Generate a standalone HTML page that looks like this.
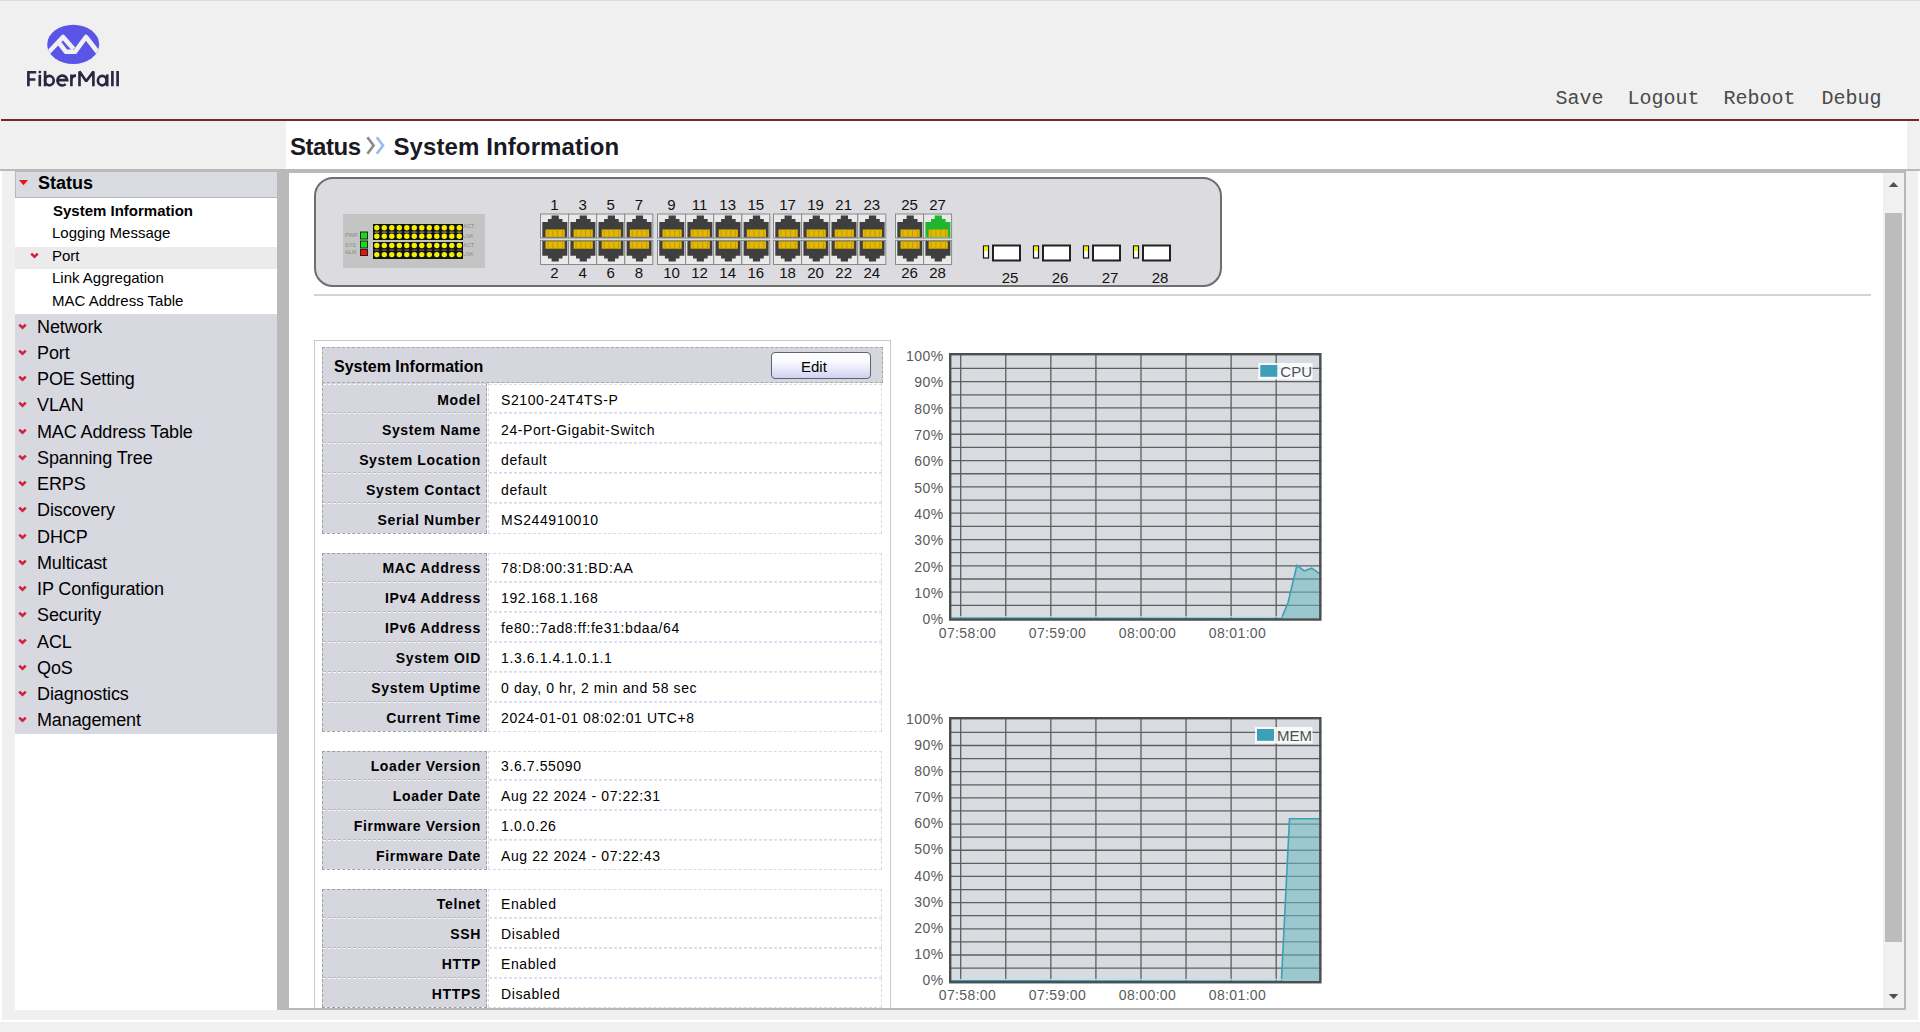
<!DOCTYPE html>
<html><head><meta charset="utf-8"><title>System Information</title>
<style>
html,body{margin:0;padding:0;}
body{width:1920px;height:1032px;overflow:hidden;position:relative;background:#f0f0f0;font-family:"Liberation Sans", sans-serif;color:#000;}
.abs{position:absolute;}
.t{position:absolute;white-space:nowrap;line-height:1;}
</style></head><body>

<div class="abs" style="left:0px;top:0px;width:1920px;height:1px;background:#dcdcd8;"></div>
<svg class="abs" style="left:0;top:0" width="140" height="100" viewBox="0 0 140 100">
<defs><clipPath id="ec"><ellipse cx="73.2" cy="44.4" rx="26" ry="19.7"/></clipPath></defs>
<ellipse cx="73.2" cy="44.4" rx="26" ry="19.7" fill="#5a55e6"/>
<g clip-path="url(#ec)" fill="none" stroke="#f0f0f0" stroke-width="4.6" stroke-linejoin="round">
<path d="M47,54 L63,37 L73.5,49"/>
<path d="M59.5,43.5 L66,51.8 L75,51.8 L86,37 L100,55"/>
</g>
<g fill="none" stroke="#2a2840" stroke-width="2.65" stroke-linecap="butt" stroke-linejoin="miter">
<path d="M28.4,86.3 V70.9 M27.1,72.2 H36.2 M27.1,79.5 H35.4"/>
<path d="M39.8,74.8 V86.3"/>
<path d="M45.1,70.9 V86.3"/>
<ellipse cx="49.4" cy="80.6" rx="4.35" ry="4.7"/>
<path d="M57.3,80.1 H67.2 A4.9,4.95 0 1 0 65.7,84.1"/>
<path d="M71.4,74.5 V86.3 M71.4,80 Q71.4,75.6 76,75.6"/>
<path d="M79.5,86.3 V71.6 L86.2,81.2 L93.4,71.6 V86.3" stroke-linejoin="bevel"/>
<ellipse cx="102.2" cy="80.6" rx="4.3" ry="4.7"/>
<path d="M107.2,74.4 V86.3"/>
<path d="M112.4,70.9 V86.3 M117.6,70.9 V86.3"/>
</g>
<circle cx="39.8" cy="72.1" r="1.4" fill="#2a2840"/>
</svg>
<div class="t" style="left:1555.5px;top:89px;font-family:'Liberation Mono', monospace;font-size:20px;color:#4a4a4a;">Save</div>
<div class="t" style="left:1627.5px;top:89px;font-family:'Liberation Mono', monospace;font-size:20px;color:#4a4a4a;">Logout</div>
<div class="t" style="left:1723.5px;top:89px;font-family:'Liberation Mono', monospace;font-size:20px;color:#4a4a4a;">Reboot</div>
<div class="t" style="left:1821.5px;top:89px;font-family:'Liberation Mono', monospace;font-size:20px;color:#4a4a4a;">Debug</div>
<div class="abs" style="left:1px;top:119px;width:1918px;height:2px;background:#7a2828;"></div>
<div class="abs" style="left:286px;top:121px;width:1621px;height:48px;background:#fff;"></div>
<div class="t" style="left:290px;top:135.18px;font-size:24px;font-weight:bold;color:#1a1a24;letter-spacing:-0.45px;">Status</div>
<svg class="abs" style="left:360px;top:132px" width="30" height="28" viewBox="0 0 30 28">
<path d="M7.4,5.3 L13.6,13.5 L7.4,21.8" fill="none" stroke="#8c8c8c" stroke-width="2.7"/>
<path d="M16.8,5.3 L23,13.5 L16.8,21.8" fill="none" stroke="#96bff0" stroke-width="2.7"/>
</svg>
<div class="t" style="left:393.5px;top:135.18px;font-size:24px;font-weight:bold;color:#1a1a24;letter-spacing:0.1px;">System Information</div>
<div class="abs" style="left:0px;top:169px;width:1920px;height:2px;background:#b9b9b9;"></div>
<div class="abs" style="left:277px;top:169px;width:1629px;height:4px;background:#b9b9b9;"></div>
<div class="abs" style="left:0px;top:171px;width:2px;height:849px;background:#fff;"></div>
<div class="abs" style="left:15px;top:171px;width:262px;height:839px;background:#fff;"></div>
<div class="abs" style="left:15px;top:171px;width:262px;height:26px;background:#d8dce0;border-top:1px solid #b8b8b8;border-left:1px solid #b8b8b8;border-bottom:1px solid #b8b8b8;box-sizing:border-box;height:27px;"></div>
<svg class="abs" style="left:18px;top:178px" width="12" height="10"><path d="M1,2 L10,2 L5.5,7.2 Z" fill="#e8141c"/></svg>
<div class="t" style="left:38px;top:174.26px;font-size:18px;font-weight:bold;">Status</div>
<div class="t" style="left:53px;top:203.40px;font-size:15px;font-weight:bold;">System Information</div>
<div class="t" style="left:52px;top:225.30px;font-size:15px;">Logging Message</div>
<div class="abs" style="left:15px;top:247px;width:262px;height:22px;background:#ebebeb;"></div>
<svg class="abs" style="left:30px;top:252px" width="10" height="8" viewBox="0 0 10 8"><path d="M1.2,1.6 L4.5,4.8 L7.8,1.6" fill="none" stroke="#d42040" stroke-width="2.6" stroke-linejoin="miter"/></svg>
<div class="t" style="left:52px;top:247.90px;font-size:15px;">Port</div>
<div class="t" style="left:52px;top:270.20px;font-size:15px;">Link Aggregation</div>
<div class="t" style="left:52px;top:293.10px;font-size:15px;">MAC Address Table</div>
<div class="abs" style="left:15px;top:314px;width:262px;height:420px;background:#d8d8e0;"></div>
<svg class="abs" style="left:18px;top:322.5px" width="10" height="8" viewBox="0 0 10 8"><path d="M1.2,1.6 L4.5,4.8 L7.8,1.6" fill="none" stroke="#d42040" stroke-width="2.6" stroke-linejoin="miter"/></svg>
<div class="t" style="left:37px;top:317.66px;font-size:18px;letter-spacing:-0.12px;">Network</div>
<svg class="abs" style="left:18px;top:348.75px" width="10" height="8" viewBox="0 0 10 8"><path d="M1.2,1.6 L4.5,4.8 L7.8,1.6" fill="none" stroke="#d42040" stroke-width="2.6" stroke-linejoin="miter"/></svg>
<div class="t" style="left:37px;top:343.91px;font-size:18px;letter-spacing:-0.12px;">Port</div>
<svg class="abs" style="left:18px;top:375.0px" width="10" height="8" viewBox="0 0 10 8"><path d="M1.2,1.6 L4.5,4.8 L7.8,1.6" fill="none" stroke="#d42040" stroke-width="2.6" stroke-linejoin="miter"/></svg>
<div class="t" style="left:37px;top:370.16px;font-size:18px;letter-spacing:-0.12px;">POE Setting</div>
<svg class="abs" style="left:18px;top:401.25px" width="10" height="8" viewBox="0 0 10 8"><path d="M1.2,1.6 L4.5,4.8 L7.8,1.6" fill="none" stroke="#d42040" stroke-width="2.6" stroke-linejoin="miter"/></svg>
<div class="t" style="left:37px;top:396.41px;font-size:18px;letter-spacing:-0.12px;">VLAN</div>
<svg class="abs" style="left:18px;top:427.5px" width="10" height="8" viewBox="0 0 10 8"><path d="M1.2,1.6 L4.5,4.8 L7.8,1.6" fill="none" stroke="#d42040" stroke-width="2.6" stroke-linejoin="miter"/></svg>
<div class="t" style="left:37px;top:422.66px;font-size:18px;letter-spacing:-0.12px;">MAC Address Table</div>
<svg class="abs" style="left:18px;top:453.75px" width="10" height="8" viewBox="0 0 10 8"><path d="M1.2,1.6 L4.5,4.8 L7.8,1.6" fill="none" stroke="#d42040" stroke-width="2.6" stroke-linejoin="miter"/></svg>
<div class="t" style="left:37px;top:448.91px;font-size:18px;letter-spacing:-0.12px;">Spanning Tree</div>
<svg class="abs" style="left:18px;top:480.0px" width="10" height="8" viewBox="0 0 10 8"><path d="M1.2,1.6 L4.5,4.8 L7.8,1.6" fill="none" stroke="#d42040" stroke-width="2.6" stroke-linejoin="miter"/></svg>
<div class="t" style="left:37px;top:475.16px;font-size:18px;letter-spacing:-0.12px;">ERPS</div>
<svg class="abs" style="left:18px;top:506.25px" width="10" height="8" viewBox="0 0 10 8"><path d="M1.2,1.6 L4.5,4.8 L7.8,1.6" fill="none" stroke="#d42040" stroke-width="2.6" stroke-linejoin="miter"/></svg>
<div class="t" style="left:37px;top:501.41px;font-size:18px;letter-spacing:-0.12px;">Discovery</div>
<svg class="abs" style="left:18px;top:532.5px" width="10" height="8" viewBox="0 0 10 8"><path d="M1.2,1.6 L4.5,4.8 L7.8,1.6" fill="none" stroke="#d42040" stroke-width="2.6" stroke-linejoin="miter"/></svg>
<div class="t" style="left:37px;top:527.66px;font-size:18px;letter-spacing:-0.12px;">DHCP</div>
<svg class="abs" style="left:18px;top:558.75px" width="10" height="8" viewBox="0 0 10 8"><path d="M1.2,1.6 L4.5,4.8 L7.8,1.6" fill="none" stroke="#d42040" stroke-width="2.6" stroke-linejoin="miter"/></svg>
<div class="t" style="left:37px;top:553.91px;font-size:18px;letter-spacing:-0.12px;">Multicast</div>
<svg class="abs" style="left:18px;top:585.0px" width="10" height="8" viewBox="0 0 10 8"><path d="M1.2,1.6 L4.5,4.8 L7.8,1.6" fill="none" stroke="#d42040" stroke-width="2.6" stroke-linejoin="miter"/></svg>
<div class="t" style="left:37px;top:580.16px;font-size:18px;letter-spacing:-0.12px;">IP Configuration</div>
<svg class="abs" style="left:18px;top:611.25px" width="10" height="8" viewBox="0 0 10 8"><path d="M1.2,1.6 L4.5,4.8 L7.8,1.6" fill="none" stroke="#d42040" stroke-width="2.6" stroke-linejoin="miter"/></svg>
<div class="t" style="left:37px;top:606.41px;font-size:18px;letter-spacing:-0.12px;">Security</div>
<svg class="abs" style="left:18px;top:637.5px" width="10" height="8" viewBox="0 0 10 8"><path d="M1.2,1.6 L4.5,4.8 L7.8,1.6" fill="none" stroke="#d42040" stroke-width="2.6" stroke-linejoin="miter"/></svg>
<div class="t" style="left:37px;top:632.66px;font-size:18px;letter-spacing:-0.12px;">ACL</div>
<svg class="abs" style="left:18px;top:663.75px" width="10" height="8" viewBox="0 0 10 8"><path d="M1.2,1.6 L4.5,4.8 L7.8,1.6" fill="none" stroke="#d42040" stroke-width="2.6" stroke-linejoin="miter"/></svg>
<div class="t" style="left:37px;top:658.91px;font-size:18px;letter-spacing:-0.12px;">QoS</div>
<svg class="abs" style="left:18px;top:690.0px" width="10" height="8" viewBox="0 0 10 8"><path d="M1.2,1.6 L4.5,4.8 L7.8,1.6" fill="none" stroke="#d42040" stroke-width="2.6" stroke-linejoin="miter"/></svg>
<div class="t" style="left:37px;top:685.16px;font-size:18px;letter-spacing:-0.12px;">Diagnostics</div>
<svg class="abs" style="left:18px;top:716.25px" width="10" height="8" viewBox="0 0 10 8"><path d="M1.2,1.6 L4.5,4.8 L7.8,1.6" fill="none" stroke="#d42040" stroke-width="2.6" stroke-linejoin="miter"/></svg>
<div class="t" style="left:37px;top:711.41px;font-size:18px;letter-spacing:-0.12px;">Management</div>
<div class="abs" style="left:277px;top:169px;width:12px;height:841px;background:#b9b9b9;"></div>
<div class="abs" style="left:289px;top:173px;width:1615px;height:835px;background:#fff;"></div>
<div class="abs" style="left:277px;top:1008px;width:1629px;height:2px;background:#b9b9b9;"></div>
<div class="abs" style="left:1904px;top:169px;width:2px;height:841px;background:#b9b9b9;"></div>
<div class="abs" style="left:1883px;top:173px;width:21px;height:835px;background:#f0f0f0;"></div>
<div class="abs" style="left:1885px;top:213px;width:17px;height:729px;background:#bcbcbc;"></div>
<svg class="abs" style="left:1883px;top:178px" width="21" height="12"><path d="M5.8,9 L10.6,3.9 L15.3,9 Z" fill="#505050"/></svg>
<svg class="abs" style="left:1883px;top:991px" width="21" height="12"><path d="M5.8,3 L10.6,8.1 L15.3,3 Z" fill="#505050"/></svg>
<div class="abs" style="left:1918px;top:171px;width:2px;height:849px;background:#fff;"></div>
<div class="abs" style="left:0px;top:1020px;width:1920px;height:2px;background:#fff;"></div>
<div class="abs" style="left:0;top:0;width:1920px;height:1032px;clip-path:inset(173px 37px 24px 289px);">
<div class="abs" style="left:314px;top:177px;width:908px;height:110px;box-sizing:border-box;border:2px solid #6e6e6e;border-radius:19px;background:#dcdbe0;"></div>
<div class="abs" style="left:343px;top:214px;width:142px;height:54px;background:#c4c4c4;"></div>
<svg class="abs" style="left:343px;top:214px" width="142" height="54" viewBox="0 0 142 54"><text x="2" y="23" font-family="Liberation Sans" font-size="5.5" fill="#8a8a8a">PWR</text><text x="2" y="32.5" font-family="Liberation Sans" font-size="5.5" fill="#8a8a8a">SYS</text><text x="2" y="40" font-family="Liberation Sans" font-size="5.5" fill="#8a8a8a">ALM</text><text x="120" y="14" font-family="Liberation Sans" font-size="5.5" fill="#8a8a8a">ACT</text><text x="120" y="23.5" font-family="Liberation Sans" font-size="5.5" fill="#8a8a8a">LNK</text><text x="120" y="32.5" font-family="Liberation Sans" font-size="5.5" fill="#8a8a8a">ACT</text><text x="120" y="41.5" font-family="Liberation Sans" font-size="5.5" fill="#8a8a8a">LNK</text><rect x="17" y="17.5" width="8" height="8" fill="#222"/><rect x="18" y="18.5" width="6" height="6" fill="#10e010"/><rect x="17" y="26.5" width="8" height="8" fill="#222"/><rect x="18" y="27.5" width="6" height="6" fill="#10e010"/><rect x="17" y="35" width="8" height="7" fill="#222"/><rect x="18" y="36" width="6" height="5" fill="#f01010"/><rect x="30" y="10" width="90" height="16" fill="#111"/><rect x="30" y="28" width="90" height="17" fill="#111"/><circle cx="33.8" cy="13.8" r="2.7" fill="#f2f000"/><circle cx="33.8" cy="22.3" r="2.7" fill="#f2f000"/><circle cx="33.8" cy="31.5" r="2.7" fill="#f2f000"/><circle cx="33.8" cy="40.6" r="2.7" fill="#f2f000"/><rect x="31.3" y="17.6" width="5" height="1" fill="#aaa"/><rect x="31.3" y="35.6" width="5" height="1" fill="#777"/><circle cx="41.3" cy="13.8" r="2.7" fill="#f2f000"/><circle cx="41.3" cy="22.3" r="2.7" fill="#f2f000"/><circle cx="41.3" cy="31.5" r="2.7" fill="#f2f000"/><circle cx="41.3" cy="40.6" r="2.7" fill="#f2f000"/><rect x="38.8" y="17.6" width="5" height="1" fill="#aaa"/><rect x="38.8" y="35.6" width="5" height="1" fill="#777"/><circle cx="48.8" cy="13.8" r="2.7" fill="#f2f000"/><circle cx="48.8" cy="22.3" r="2.7" fill="#f2f000"/><circle cx="48.8" cy="31.5" r="2.7" fill="#f2f000"/><circle cx="48.8" cy="40.6" r="2.7" fill="#f2f000"/><rect x="46.3" y="17.6" width="5" height="1" fill="#aaa"/><rect x="46.3" y="35.6" width="5" height="1" fill="#777"/><circle cx="56.3" cy="13.8" r="2.7" fill="#f2f000"/><circle cx="56.3" cy="22.3" r="2.7" fill="#f2f000"/><circle cx="56.3" cy="31.5" r="2.7" fill="#f2f000"/><circle cx="56.3" cy="40.6" r="2.7" fill="#f2f000"/><rect x="53.8" y="17.6" width="5" height="1" fill="#aaa"/><rect x="53.8" y="35.6" width="5" height="1" fill="#777"/><circle cx="63.8" cy="13.8" r="2.7" fill="#f2f000"/><circle cx="63.8" cy="22.3" r="2.7" fill="#f2f000"/><circle cx="63.8" cy="31.5" r="2.7" fill="#f2f000"/><circle cx="63.8" cy="40.6" r="2.7" fill="#f2f000"/><rect x="61.3" y="17.6" width="5" height="1" fill="#aaa"/><rect x="61.3" y="35.6" width="5" height="1" fill="#777"/><circle cx="71.3" cy="13.8" r="2.7" fill="#f2f000"/><circle cx="71.3" cy="22.3" r="2.7" fill="#f2f000"/><circle cx="71.3" cy="31.5" r="2.7" fill="#f2f000"/><circle cx="71.3" cy="40.6" r="2.7" fill="#f2f000"/><rect x="68.8" y="17.6" width="5" height="1" fill="#aaa"/><rect x="68.8" y="35.6" width="5" height="1" fill="#777"/><circle cx="78.8" cy="13.8" r="2.7" fill="#f2f000"/><circle cx="78.8" cy="22.3" r="2.7" fill="#f2f000"/><circle cx="78.8" cy="31.5" r="2.7" fill="#f2f000"/><circle cx="78.8" cy="40.6" r="2.7" fill="#f2f000"/><rect x="76.3" y="17.6" width="5" height="1" fill="#aaa"/><rect x="76.3" y="35.6" width="5" height="1" fill="#777"/><circle cx="86.3" cy="13.8" r="2.7" fill="#f2f000"/><circle cx="86.3" cy="22.3" r="2.7" fill="#f2f000"/><circle cx="86.3" cy="31.5" r="2.7" fill="#f2f000"/><circle cx="86.3" cy="40.6" r="2.7" fill="#f2f000"/><rect x="83.8" y="17.6" width="5" height="1" fill="#aaa"/><rect x="83.8" y="35.6" width="5" height="1" fill="#777"/><circle cx="93.8" cy="13.8" r="2.7" fill="#f2f000"/><circle cx="93.8" cy="22.3" r="2.7" fill="#f2f000"/><circle cx="93.8" cy="31.5" r="2.7" fill="#f2f000"/><circle cx="93.8" cy="40.6" r="2.7" fill="#f2f000"/><rect x="91.3" y="17.6" width="5" height="1" fill="#aaa"/><rect x="91.3" y="35.6" width="5" height="1" fill="#777"/><circle cx="101.3" cy="13.8" r="2.7" fill="#f2f000"/><circle cx="101.3" cy="22.3" r="2.7" fill="#f2f000"/><circle cx="101.3" cy="31.5" r="2.7" fill="#f2f000"/><circle cx="101.3" cy="40.6" r="2.7" fill="#f2f000"/><rect x="98.8" y="17.6" width="5" height="1" fill="#aaa"/><rect x="98.8" y="35.6" width="5" height="1" fill="#777"/><circle cx="108.8" cy="13.8" r="2.7" fill="#f2f000"/><circle cx="108.8" cy="22.3" r="2.7" fill="#f2f000"/><circle cx="108.8" cy="31.5" r="2.7" fill="#f2f000"/><circle cx="108.8" cy="40.6" r="2.7" fill="#f2f000"/><rect x="106.3" y="17.6" width="5" height="1" fill="#aaa"/><rect x="106.3" y="35.6" width="5" height="1" fill="#777"/><circle cx="116.3" cy="13.8" r="2.7" fill="#f2f000"/><circle cx="116.3" cy="22.3" r="2.7" fill="#f2f000"/><circle cx="116.3" cy="31.5" r="2.7" fill="#f2f000"/><circle cx="116.3" cy="40.6" r="2.7" fill="#f2f000"/><rect x="113.8" y="17.6" width="5" height="1" fill="#aaa"/><rect x="113.8" y="35.6" width="5" height="1" fill="#777"/></svg>
<svg class="abs" style="left:0;top:0;overflow:visible" width="1" height="1"><rect x="540.5" y="214.0" width="28" height="24" fill="#e9e9e9" stroke="#8a8a8a" stroke-width="1"/><polygon transform="translate(540.0,213.5)" points="2.3,8.4 2.3,24 27.3,24 27.3,8.4 22.5,8.4 22.5,5.5 18.8,5.5 18.8,2 11.6,2 11.6,5.5 7.9,5.5 7.9,8.4" fill="#3f3f3f"/><rect x="545.5" y="229.5" width="19.2" height="7.4" fill="#e2b800"/><rect x="547.5" y="229.5" width="1" height="7.5" fill="#c89a00"/><rect x="552.3" y="229.5" width="1" height="7.5" fill="#c89a00"/><rect x="557.1" y="229.5" width="1" height="7.5" fill="#c89a00"/><rect x="561.9" y="229.5" width="1" height="7.5" fill="#c89a00"/><rect x="540.5" y="240.5" width="28" height="24" fill="#e9e9e9" stroke="#8a8a8a" stroke-width="1"/><polygon transform="translate(540.0,240)" points="2.3,1 2.3,15.7 7.9,15.7 7.9,18.6 11.6,18.6 11.6,21.6 18.8,21.6 18.8,18.6 22.5,18.6 22.5,15.7 27.3,15.7 27.3,1" fill="#3f3f3f"/><rect x="545.5" y="241.3" width="19.2" height="7.4" fill="#e2b800"/><rect x="547.5" y="241.3" width="1" height="7.5" fill="#c89a00"/><rect x="552.3" y="241.3" width="1" height="7.5" fill="#c89a00"/><rect x="557.1" y="241.3" width="1" height="7.5" fill="#c89a00"/><rect x="561.9" y="241.3" width="1" height="7.5" fill="#c89a00"/><text x="554.5" y="210.2" text-anchor="middle" font-family="Liberation Sans" font-size="15" fill="#111">1</text><text x="554.5" y="278.2" text-anchor="middle" font-family="Liberation Sans" font-size="15" fill="#111">2</text><rect x="568.6" y="214.0" width="28" height="24" fill="#e9e9e9" stroke="#8a8a8a" stroke-width="1"/><polygon transform="translate(568.1,213.5)" points="2.3,8.4 2.3,24 27.3,24 27.3,8.4 22.5,8.4 22.5,5.5 18.8,5.5 18.8,2 11.6,2 11.6,5.5 7.9,5.5 7.9,8.4" fill="#3f3f3f"/><rect x="573.6" y="229.5" width="19.2" height="7.4" fill="#e2b800"/><rect x="575.6" y="229.5" width="1" height="7.5" fill="#c89a00"/><rect x="580.4" y="229.5" width="1" height="7.5" fill="#c89a00"/><rect x="585.2" y="229.5" width="1" height="7.5" fill="#c89a00"/><rect x="590.0" y="229.5" width="1" height="7.5" fill="#c89a00"/><rect x="568.6" y="240.5" width="28" height="24" fill="#e9e9e9" stroke="#8a8a8a" stroke-width="1"/><polygon transform="translate(568.1,240)" points="2.3,1 2.3,15.7 7.9,15.7 7.9,18.6 11.6,18.6 11.6,21.6 18.8,21.6 18.8,18.6 22.5,18.6 22.5,15.7 27.3,15.7 27.3,1" fill="#3f3f3f"/><rect x="573.6" y="241.3" width="19.2" height="7.4" fill="#e2b800"/><rect x="575.6" y="241.3" width="1" height="7.5" fill="#c89a00"/><rect x="580.4" y="241.3" width="1" height="7.5" fill="#c89a00"/><rect x="585.2" y="241.3" width="1" height="7.5" fill="#c89a00"/><rect x="590.0" y="241.3" width="1" height="7.5" fill="#c89a00"/><text x="582.6" y="210.2" text-anchor="middle" font-family="Liberation Sans" font-size="15" fill="#111">3</text><text x="582.6" y="278.2" text-anchor="middle" font-family="Liberation Sans" font-size="15" fill="#111">4</text><rect x="596.7" y="214.0" width="28" height="24" fill="#e9e9e9" stroke="#8a8a8a" stroke-width="1"/><polygon transform="translate(596.2,213.5)" points="2.3,8.4 2.3,24 27.3,24 27.3,8.4 22.5,8.4 22.5,5.5 18.8,5.5 18.8,2 11.6,2 11.6,5.5 7.9,5.5 7.9,8.4" fill="#3f3f3f"/><rect x="601.7" y="229.5" width="19.2" height="7.4" fill="#e2b800"/><rect x="603.7" y="229.5" width="1" height="7.5" fill="#c89a00"/><rect x="608.5" y="229.5" width="1" height="7.5" fill="#c89a00"/><rect x="613.3" y="229.5" width="1" height="7.5" fill="#c89a00"/><rect x="618.1" y="229.5" width="1" height="7.5" fill="#c89a00"/><rect x="596.7" y="240.5" width="28" height="24" fill="#e9e9e9" stroke="#8a8a8a" stroke-width="1"/><polygon transform="translate(596.2,240)" points="2.3,1 2.3,15.7 7.9,15.7 7.9,18.6 11.6,18.6 11.6,21.6 18.8,21.6 18.8,18.6 22.5,18.6 22.5,15.7 27.3,15.7 27.3,1" fill="#3f3f3f"/><rect x="601.7" y="241.3" width="19.2" height="7.4" fill="#e2b800"/><rect x="603.7" y="241.3" width="1" height="7.5" fill="#c89a00"/><rect x="608.5" y="241.3" width="1" height="7.5" fill="#c89a00"/><rect x="613.3" y="241.3" width="1" height="7.5" fill="#c89a00"/><rect x="618.1" y="241.3" width="1" height="7.5" fill="#c89a00"/><text x="610.7" y="210.2" text-anchor="middle" font-family="Liberation Sans" font-size="15" fill="#111">5</text><text x="610.7" y="278.2" text-anchor="middle" font-family="Liberation Sans" font-size="15" fill="#111">6</text><rect x="624.8" y="214.0" width="28" height="24" fill="#e9e9e9" stroke="#8a8a8a" stroke-width="1"/><polygon transform="translate(624.3,213.5)" points="2.3,8.4 2.3,24 27.3,24 27.3,8.4 22.5,8.4 22.5,5.5 18.8,5.5 18.8,2 11.6,2 11.6,5.5 7.9,5.5 7.9,8.4" fill="#3f3f3f"/><rect x="629.8" y="229.5" width="19.2" height="7.4" fill="#e2b800"/><rect x="631.8" y="229.5" width="1" height="7.5" fill="#c89a00"/><rect x="636.6" y="229.5" width="1" height="7.5" fill="#c89a00"/><rect x="641.4" y="229.5" width="1" height="7.5" fill="#c89a00"/><rect x="646.2" y="229.5" width="1" height="7.5" fill="#c89a00"/><rect x="624.8" y="240.5" width="28" height="24" fill="#e9e9e9" stroke="#8a8a8a" stroke-width="1"/><polygon transform="translate(624.3,240)" points="2.3,1 2.3,15.7 7.9,15.7 7.9,18.6 11.6,18.6 11.6,21.6 18.8,21.6 18.8,18.6 22.5,18.6 22.5,15.7 27.3,15.7 27.3,1" fill="#3f3f3f"/><rect x="629.8" y="241.3" width="19.2" height="7.4" fill="#e2b800"/><rect x="631.8" y="241.3" width="1" height="7.5" fill="#c89a00"/><rect x="636.6" y="241.3" width="1" height="7.5" fill="#c89a00"/><rect x="641.4" y="241.3" width="1" height="7.5" fill="#c89a00"/><rect x="646.2" y="241.3" width="1" height="7.5" fill="#c89a00"/><text x="638.8" y="210.2" text-anchor="middle" font-family="Liberation Sans" font-size="15" fill="#111">7</text><text x="638.8" y="278.2" text-anchor="middle" font-family="Liberation Sans" font-size="15" fill="#111">8</text><rect x="657.5" y="214.0" width="28" height="24" fill="#e9e9e9" stroke="#8a8a8a" stroke-width="1"/><polygon transform="translate(657.0,213.5)" points="2.3,8.4 2.3,24 27.3,24 27.3,8.4 22.5,8.4 22.5,5.5 18.8,5.5 18.8,2 11.6,2 11.6,5.5 7.9,5.5 7.9,8.4" fill="#3f3f3f"/><rect x="662.5" y="229.5" width="19.2" height="7.4" fill="#e2b800"/><rect x="664.5" y="229.5" width="1" height="7.5" fill="#c89a00"/><rect x="669.3" y="229.5" width="1" height="7.5" fill="#c89a00"/><rect x="674.1" y="229.5" width="1" height="7.5" fill="#c89a00"/><rect x="678.9" y="229.5" width="1" height="7.5" fill="#c89a00"/><rect x="657.5" y="240.5" width="28" height="24" fill="#e9e9e9" stroke="#8a8a8a" stroke-width="1"/><polygon transform="translate(657.0,240)" points="2.3,1 2.3,15.7 7.9,15.7 7.9,18.6 11.6,18.6 11.6,21.6 18.8,21.6 18.8,18.6 22.5,18.6 22.5,15.7 27.3,15.7 27.3,1" fill="#3f3f3f"/><rect x="662.5" y="241.3" width="19.2" height="7.4" fill="#e2b800"/><rect x="664.5" y="241.3" width="1" height="7.5" fill="#c89a00"/><rect x="669.3" y="241.3" width="1" height="7.5" fill="#c89a00"/><rect x="674.1" y="241.3" width="1" height="7.5" fill="#c89a00"/><rect x="678.9" y="241.3" width="1" height="7.5" fill="#c89a00"/><text x="671.5" y="210.2" text-anchor="middle" font-family="Liberation Sans" font-size="15" fill="#111">9</text><text x="671.5" y="278.2" text-anchor="middle" font-family="Liberation Sans" font-size="15" fill="#111">10</text><rect x="685.6" y="214.0" width="28" height="24" fill="#e9e9e9" stroke="#8a8a8a" stroke-width="1"/><polygon transform="translate(685.1,213.5)" points="2.3,8.4 2.3,24 27.3,24 27.3,8.4 22.5,8.4 22.5,5.5 18.8,5.5 18.8,2 11.6,2 11.6,5.5 7.9,5.5 7.9,8.4" fill="#3f3f3f"/><rect x="690.6" y="229.5" width="19.2" height="7.4" fill="#e2b800"/><rect x="692.6" y="229.5" width="1" height="7.5" fill="#c89a00"/><rect x="697.4" y="229.5" width="1" height="7.5" fill="#c89a00"/><rect x="702.2" y="229.5" width="1" height="7.5" fill="#c89a00"/><rect x="707.0" y="229.5" width="1" height="7.5" fill="#c89a00"/><rect x="685.6" y="240.5" width="28" height="24" fill="#e9e9e9" stroke="#8a8a8a" stroke-width="1"/><polygon transform="translate(685.1,240)" points="2.3,1 2.3,15.7 7.9,15.7 7.9,18.6 11.6,18.6 11.6,21.6 18.8,21.6 18.8,18.6 22.5,18.6 22.5,15.7 27.3,15.7 27.3,1" fill="#3f3f3f"/><rect x="690.6" y="241.3" width="19.2" height="7.4" fill="#e2b800"/><rect x="692.6" y="241.3" width="1" height="7.5" fill="#c89a00"/><rect x="697.4" y="241.3" width="1" height="7.5" fill="#c89a00"/><rect x="702.2" y="241.3" width="1" height="7.5" fill="#c89a00"/><rect x="707.0" y="241.3" width="1" height="7.5" fill="#c89a00"/><text x="699.6" y="210.2" text-anchor="middle" font-family="Liberation Sans" font-size="15" fill="#111">11</text><text x="699.6" y="278.2" text-anchor="middle" font-family="Liberation Sans" font-size="15" fill="#111">12</text><rect x="713.7" y="214.0" width="28" height="24" fill="#e9e9e9" stroke="#8a8a8a" stroke-width="1"/><polygon transform="translate(713.2,213.5)" points="2.3,8.4 2.3,24 27.3,24 27.3,8.4 22.5,8.4 22.5,5.5 18.8,5.5 18.8,2 11.6,2 11.6,5.5 7.9,5.5 7.9,8.4" fill="#3f3f3f"/><rect x="718.7" y="229.5" width="19.2" height="7.4" fill="#e2b800"/><rect x="720.7" y="229.5" width="1" height="7.5" fill="#c89a00"/><rect x="725.5" y="229.5" width="1" height="7.5" fill="#c89a00"/><rect x="730.3" y="229.5" width="1" height="7.5" fill="#c89a00"/><rect x="735.1" y="229.5" width="1" height="7.5" fill="#c89a00"/><rect x="713.7" y="240.5" width="28" height="24" fill="#e9e9e9" stroke="#8a8a8a" stroke-width="1"/><polygon transform="translate(713.2,240)" points="2.3,1 2.3,15.7 7.9,15.7 7.9,18.6 11.6,18.6 11.6,21.6 18.8,21.6 18.8,18.6 22.5,18.6 22.5,15.7 27.3,15.7 27.3,1" fill="#3f3f3f"/><rect x="718.7" y="241.3" width="19.2" height="7.4" fill="#e2b800"/><rect x="720.7" y="241.3" width="1" height="7.5" fill="#c89a00"/><rect x="725.5" y="241.3" width="1" height="7.5" fill="#c89a00"/><rect x="730.3" y="241.3" width="1" height="7.5" fill="#c89a00"/><rect x="735.1" y="241.3" width="1" height="7.5" fill="#c89a00"/><text x="727.7" y="210.2" text-anchor="middle" font-family="Liberation Sans" font-size="15" fill="#111">13</text><text x="727.7" y="278.2" text-anchor="middle" font-family="Liberation Sans" font-size="15" fill="#111">14</text><rect x="741.8" y="214.0" width="28" height="24" fill="#e9e9e9" stroke="#8a8a8a" stroke-width="1"/><polygon transform="translate(741.3,213.5)" points="2.3,8.4 2.3,24 27.3,24 27.3,8.4 22.5,8.4 22.5,5.5 18.8,5.5 18.8,2 11.6,2 11.6,5.5 7.9,5.5 7.9,8.4" fill="#3f3f3f"/><rect x="746.8" y="229.5" width="19.2" height="7.4" fill="#e2b800"/><rect x="748.8" y="229.5" width="1" height="7.5" fill="#c89a00"/><rect x="753.6" y="229.5" width="1" height="7.5" fill="#c89a00"/><rect x="758.4" y="229.5" width="1" height="7.5" fill="#c89a00"/><rect x="763.2" y="229.5" width="1" height="7.5" fill="#c89a00"/><rect x="741.8" y="240.5" width="28" height="24" fill="#e9e9e9" stroke="#8a8a8a" stroke-width="1"/><polygon transform="translate(741.3,240)" points="2.3,1 2.3,15.7 7.9,15.7 7.9,18.6 11.6,18.6 11.6,21.6 18.8,21.6 18.8,18.6 22.5,18.6 22.5,15.7 27.3,15.7 27.3,1" fill="#3f3f3f"/><rect x="746.8" y="241.3" width="19.2" height="7.4" fill="#e2b800"/><rect x="748.8" y="241.3" width="1" height="7.5" fill="#c89a00"/><rect x="753.6" y="241.3" width="1" height="7.5" fill="#c89a00"/><rect x="758.4" y="241.3" width="1" height="7.5" fill="#c89a00"/><rect x="763.2" y="241.3" width="1" height="7.5" fill="#c89a00"/><text x="755.8" y="210.2" text-anchor="middle" font-family="Liberation Sans" font-size="15" fill="#111">15</text><text x="755.8" y="278.2" text-anchor="middle" font-family="Liberation Sans" font-size="15" fill="#111">16</text><rect x="773.5" y="214.0" width="28" height="24" fill="#e9e9e9" stroke="#8a8a8a" stroke-width="1"/><polygon transform="translate(773.0,213.5)" points="2.3,8.4 2.3,24 27.3,24 27.3,8.4 22.5,8.4 22.5,5.5 18.8,5.5 18.8,2 11.6,2 11.6,5.5 7.9,5.5 7.9,8.4" fill="#3f3f3f"/><rect x="778.5" y="229.5" width="19.2" height="7.4" fill="#e2b800"/><rect x="780.5" y="229.5" width="1" height="7.5" fill="#c89a00"/><rect x="785.3" y="229.5" width="1" height="7.5" fill="#c89a00"/><rect x="790.1" y="229.5" width="1" height="7.5" fill="#c89a00"/><rect x="794.9" y="229.5" width="1" height="7.5" fill="#c89a00"/><rect x="773.5" y="240.5" width="28" height="24" fill="#e9e9e9" stroke="#8a8a8a" stroke-width="1"/><polygon transform="translate(773.0,240)" points="2.3,1 2.3,15.7 7.9,15.7 7.9,18.6 11.6,18.6 11.6,21.6 18.8,21.6 18.8,18.6 22.5,18.6 22.5,15.7 27.3,15.7 27.3,1" fill="#3f3f3f"/><rect x="778.5" y="241.3" width="19.2" height="7.4" fill="#e2b800"/><rect x="780.5" y="241.3" width="1" height="7.5" fill="#c89a00"/><rect x="785.3" y="241.3" width="1" height="7.5" fill="#c89a00"/><rect x="790.1" y="241.3" width="1" height="7.5" fill="#c89a00"/><rect x="794.9" y="241.3" width="1" height="7.5" fill="#c89a00"/><text x="787.5" y="210.2" text-anchor="middle" font-family="Liberation Sans" font-size="15" fill="#111">17</text><text x="787.5" y="278.2" text-anchor="middle" font-family="Liberation Sans" font-size="15" fill="#111">18</text><rect x="801.6" y="214.0" width="28" height="24" fill="#e9e9e9" stroke="#8a8a8a" stroke-width="1"/><polygon transform="translate(801.1,213.5)" points="2.3,8.4 2.3,24 27.3,24 27.3,8.4 22.5,8.4 22.5,5.5 18.8,5.5 18.8,2 11.6,2 11.6,5.5 7.9,5.5 7.9,8.4" fill="#3f3f3f"/><rect x="806.6" y="229.5" width="19.2" height="7.4" fill="#e2b800"/><rect x="808.6" y="229.5" width="1" height="7.5" fill="#c89a00"/><rect x="813.4" y="229.5" width="1" height="7.5" fill="#c89a00"/><rect x="818.2" y="229.5" width="1" height="7.5" fill="#c89a00"/><rect x="823.0" y="229.5" width="1" height="7.5" fill="#c89a00"/><rect x="801.6" y="240.5" width="28" height="24" fill="#e9e9e9" stroke="#8a8a8a" stroke-width="1"/><polygon transform="translate(801.1,240)" points="2.3,1 2.3,15.7 7.9,15.7 7.9,18.6 11.6,18.6 11.6,21.6 18.8,21.6 18.8,18.6 22.5,18.6 22.5,15.7 27.3,15.7 27.3,1" fill="#3f3f3f"/><rect x="806.6" y="241.3" width="19.2" height="7.4" fill="#e2b800"/><rect x="808.6" y="241.3" width="1" height="7.5" fill="#c89a00"/><rect x="813.4" y="241.3" width="1" height="7.5" fill="#c89a00"/><rect x="818.2" y="241.3" width="1" height="7.5" fill="#c89a00"/><rect x="823.0" y="241.3" width="1" height="7.5" fill="#c89a00"/><text x="815.6" y="210.2" text-anchor="middle" font-family="Liberation Sans" font-size="15" fill="#111">19</text><text x="815.6" y="278.2" text-anchor="middle" font-family="Liberation Sans" font-size="15" fill="#111">20</text><rect x="829.7" y="214.0" width="28" height="24" fill="#e9e9e9" stroke="#8a8a8a" stroke-width="1"/><polygon transform="translate(829.2,213.5)" points="2.3,8.4 2.3,24 27.3,24 27.3,8.4 22.5,8.4 22.5,5.5 18.8,5.5 18.8,2 11.6,2 11.6,5.5 7.9,5.5 7.9,8.4" fill="#3f3f3f"/><rect x="834.7" y="229.5" width="19.2" height="7.4" fill="#e2b800"/><rect x="836.7" y="229.5" width="1" height="7.5" fill="#c89a00"/><rect x="841.5" y="229.5" width="1" height="7.5" fill="#c89a00"/><rect x="846.3" y="229.5" width="1" height="7.5" fill="#c89a00"/><rect x="851.1" y="229.5" width="1" height="7.5" fill="#c89a00"/><rect x="829.7" y="240.5" width="28" height="24" fill="#e9e9e9" stroke="#8a8a8a" stroke-width="1"/><polygon transform="translate(829.2,240)" points="2.3,1 2.3,15.7 7.9,15.7 7.9,18.6 11.6,18.6 11.6,21.6 18.8,21.6 18.8,18.6 22.5,18.6 22.5,15.7 27.3,15.7 27.3,1" fill="#3f3f3f"/><rect x="834.7" y="241.3" width="19.2" height="7.4" fill="#e2b800"/><rect x="836.7" y="241.3" width="1" height="7.5" fill="#c89a00"/><rect x="841.5" y="241.3" width="1" height="7.5" fill="#c89a00"/><rect x="846.3" y="241.3" width="1" height="7.5" fill="#c89a00"/><rect x="851.1" y="241.3" width="1" height="7.5" fill="#c89a00"/><text x="843.7" y="210.2" text-anchor="middle" font-family="Liberation Sans" font-size="15" fill="#111">21</text><text x="843.7" y="278.2" text-anchor="middle" font-family="Liberation Sans" font-size="15" fill="#111">22</text><rect x="857.8" y="214.0" width="28" height="24" fill="#e9e9e9" stroke="#8a8a8a" stroke-width="1"/><polygon transform="translate(857.3,213.5)" points="2.3,8.4 2.3,24 27.3,24 27.3,8.4 22.5,8.4 22.5,5.5 18.8,5.5 18.8,2 11.6,2 11.6,5.5 7.9,5.5 7.9,8.4" fill="#3f3f3f"/><rect x="862.8" y="229.5" width="19.2" height="7.4" fill="#e2b800"/><rect x="864.8" y="229.5" width="1" height="7.5" fill="#c89a00"/><rect x="869.6" y="229.5" width="1" height="7.5" fill="#c89a00"/><rect x="874.4" y="229.5" width="1" height="7.5" fill="#c89a00"/><rect x="879.2" y="229.5" width="1" height="7.5" fill="#c89a00"/><rect x="857.8" y="240.5" width="28" height="24" fill="#e9e9e9" stroke="#8a8a8a" stroke-width="1"/><polygon transform="translate(857.3,240)" points="2.3,1 2.3,15.7 7.9,15.7 7.9,18.6 11.6,18.6 11.6,21.6 18.8,21.6 18.8,18.6 22.5,18.6 22.5,15.7 27.3,15.7 27.3,1" fill="#3f3f3f"/><rect x="862.8" y="241.3" width="19.2" height="7.4" fill="#e2b800"/><rect x="864.8" y="241.3" width="1" height="7.5" fill="#c89a00"/><rect x="869.6" y="241.3" width="1" height="7.5" fill="#c89a00"/><rect x="874.4" y="241.3" width="1" height="7.5" fill="#c89a00"/><rect x="879.2" y="241.3" width="1" height="7.5" fill="#c89a00"/><text x="871.8" y="210.2" text-anchor="middle" font-family="Liberation Sans" font-size="15" fill="#111">23</text><text x="871.8" y="278.2" text-anchor="middle" font-family="Liberation Sans" font-size="15" fill="#111">24</text><rect x="895.5" y="214.0" width="28" height="24" fill="#e9e9e9" stroke="#8a8a8a" stroke-width="1"/><polygon transform="translate(895.0,213.5)" points="2.3,8.4 2.3,24 27.3,24 27.3,8.4 22.5,8.4 22.5,5.5 18.8,5.5 18.8,2 11.6,2 11.6,5.5 7.9,5.5 7.9,8.4" fill="#3f3f3f"/><rect x="900.5" y="229.5" width="19.2" height="7.4" fill="#e2b800"/><rect x="902.5" y="229.5" width="1" height="7.5" fill="#c89a00"/><rect x="907.3" y="229.5" width="1" height="7.5" fill="#c89a00"/><rect x="912.1" y="229.5" width="1" height="7.5" fill="#c89a00"/><rect x="916.9" y="229.5" width="1" height="7.5" fill="#c89a00"/><rect x="895.5" y="240.5" width="28" height="24" fill="#e9e9e9" stroke="#8a8a8a" stroke-width="1"/><polygon transform="translate(895.0,240)" points="2.3,1 2.3,15.7 7.9,15.7 7.9,18.6 11.6,18.6 11.6,21.6 18.8,21.6 18.8,18.6 22.5,18.6 22.5,15.7 27.3,15.7 27.3,1" fill="#3f3f3f"/><rect x="900.5" y="241.3" width="19.2" height="7.4" fill="#e2b800"/><rect x="902.5" y="241.3" width="1" height="7.5" fill="#c89a00"/><rect x="907.3" y="241.3" width="1" height="7.5" fill="#c89a00"/><rect x="912.1" y="241.3" width="1" height="7.5" fill="#c89a00"/><rect x="916.9" y="241.3" width="1" height="7.5" fill="#c89a00"/><text x="909.5" y="210.2" text-anchor="middle" font-family="Liberation Sans" font-size="15" fill="#111">25</text><text x="909.5" y="278.2" text-anchor="middle" font-family="Liberation Sans" font-size="15" fill="#111">26</text><rect x="923.6" y="214.0" width="28" height="24" fill="#e9e9e9" stroke="#8a8a8a" stroke-width="1"/><polygon transform="translate(923.1,213.5)" points="2.3,8.4 2.3,24 27.3,24 27.3,8.4 22.5,8.4 22.5,5.5 18.8,5.5 18.8,2 11.6,2 11.6,5.5 7.9,5.5 7.9,8.4" fill="#1fb52f"/><rect x="928.6" y="229.5" width="19.2" height="7.4" fill="#e2b800"/><rect x="930.6" y="229.5" width="1" height="7.5" fill="#c89a00"/><rect x="935.4" y="229.5" width="1" height="7.5" fill="#c89a00"/><rect x="940.2" y="229.5" width="1" height="7.5" fill="#c89a00"/><rect x="945.0" y="229.5" width="1" height="7.5" fill="#c89a00"/><rect x="923.6" y="240.5" width="28" height="24" fill="#e9e9e9" stroke="#8a8a8a" stroke-width="1"/><polygon transform="translate(923.1,240)" points="2.3,1 2.3,15.7 7.9,15.7 7.9,18.6 11.6,18.6 11.6,21.6 18.8,21.6 18.8,18.6 22.5,18.6 22.5,15.7 27.3,15.7 27.3,1" fill="#3f3f3f"/><rect x="928.6" y="241.3" width="19.2" height="7.4" fill="#e2b800"/><rect x="930.6" y="241.3" width="1" height="7.5" fill="#c89a00"/><rect x="935.4" y="241.3" width="1" height="7.5" fill="#c89a00"/><rect x="940.2" y="241.3" width="1" height="7.5" fill="#c89a00"/><rect x="945.0" y="241.3" width="1" height="7.5" fill="#c89a00"/><text x="937.6" y="210.2" text-anchor="middle" font-family="Liberation Sans" font-size="15" fill="#111">27</text><text x="937.6" y="278.2" text-anchor="middle" font-family="Liberation Sans" font-size="15" fill="#111">28</text><rect x="983.5" y="246" width="5" height="12" fill="#fff" stroke="#111" stroke-width="1.2"/><rect x="984" y="246.6" width="4" height="4.4" fill="#f0f000"/><rect x="993" y="245.5" width="27" height="15" fill="#fff" stroke="#222" stroke-width="2"/><text x="1010.0" y="282.5" text-anchor="middle" font-family="Liberation Sans" font-size="15" fill="#111">25</text><rect x="1033.5" y="246" width="5" height="12" fill="#fff" stroke="#111" stroke-width="1.2"/><rect x="1034" y="246.6" width="4" height="4.4" fill="#f0f000"/><rect x="1043" y="245.5" width="27" height="15" fill="#fff" stroke="#222" stroke-width="2"/><text x="1060.0" y="282.5" text-anchor="middle" font-family="Liberation Sans" font-size="15" fill="#111">26</text><rect x="1083.5" y="246" width="5" height="12" fill="#fff" stroke="#111" stroke-width="1.2"/><rect x="1084" y="246.6" width="4" height="4.4" fill="#f0f000"/><rect x="1093" y="245.5" width="27" height="15" fill="#fff" stroke="#222" stroke-width="2"/><text x="1110.0" y="282.5" text-anchor="middle" font-family="Liberation Sans" font-size="15" fill="#111">27</text><rect x="1133.5" y="246" width="5" height="12" fill="#fff" stroke="#111" stroke-width="1.2"/><rect x="1134" y="246.6" width="4" height="4.4" fill="#f0f000"/><rect x="1143" y="245.5" width="27" height="15" fill="#fff" stroke="#222" stroke-width="2"/><text x="1160.0" y="282.5" text-anchor="middle" font-family="Liberation Sans" font-size="15" fill="#111">28</text></svg>
<div class="abs" style="left:314px;top:294px;width:1557px;height:2px;background:#d4d4d4;"></div>
<div class="abs" style="left:314px;top:340px;width:577px;height:700px;box-sizing:border-box;border:1px solid #c8c8c8;"></div>
<div class="abs" style="left:322px;top:347px;width:561px;height:36px;box-sizing:border-box;background:#d6d6de;border:1px dashed #a8a8a8;"></div>
<div class="t" style="left:334px;top:359.46px;font-size:16px;font-weight:bold;">System Information</div>
<div class="abs" style="left:771px;top:352px;width:100px;height:27px;box-sizing:border-box;border:1px solid #5f6270;border-radius:4px;background:linear-gradient(#ffffff 0%,#fafaff 35%,#d2d2f2 100%);"></div>
<div class="t" style="left:801px;top:359.00px;font-size:15px;">Edit</div>
<div class="abs" style="left:322px;top:383px;width:165px;height:150px;background:#d6d6de;"></div>
<div class="abs" style="left:323px;top:412px;width:163px;height:1px;background:repeating-linear-gradient(90deg,#b8b8c0 0 3px,transparent 3px 5px);"></div>
<div class="abs" style="left:323px;top:413px;width:163px;height:1px;background:repeating-linear-gradient(90deg,#f8f8fa 0 3px,transparent 3px 5px);"></div>
<div class="abs" style="left:489px;top:412px;width:393px;height:1px;background:repeating-linear-gradient(90deg,#d8d8ee 0 3px,#ffffff 3px 5px);"></div>
<div class="abs" style="left:489px;top:413px;width:393px;height:1px;background:repeating-linear-gradient(90deg,#e4e4f4 0 3px,#ffffff 3px 5px);"></div>
<div class="t" style="right:1439.1px;top:392.75px;font-size:14px;text-align:right;font-weight:bold;letter-spacing:0.65px;">Model</div>
<div class="t" style="left:501px;top:392.75px;font-size:14px;letter-spacing:0.6px;">S2100-24T4TS-P</div>
<div class="abs" style="left:323px;top:442px;width:163px;height:1px;background:repeating-linear-gradient(90deg,#b8b8c0 0 3px,transparent 3px 5px);"></div>
<div class="abs" style="left:323px;top:443px;width:163px;height:1px;background:repeating-linear-gradient(90deg,#f8f8fa 0 3px,transparent 3px 5px);"></div>
<div class="abs" style="left:489px;top:442px;width:393px;height:1px;background:repeating-linear-gradient(90deg,#d8d8ee 0 3px,#ffffff 3px 5px);"></div>
<div class="abs" style="left:489px;top:443px;width:393px;height:1px;background:repeating-linear-gradient(90deg,#e4e4f4 0 3px,#ffffff 3px 5px);"></div>
<div class="t" style="right:1439.1px;top:422.75px;font-size:14px;text-align:right;font-weight:bold;letter-spacing:0.65px;">System Name</div>
<div class="t" style="left:501px;top:422.75px;font-size:14px;letter-spacing:0.6px;">24-Port-Gigabit-Switch</div>
<div class="abs" style="left:323px;top:472px;width:163px;height:1px;background:repeating-linear-gradient(90deg,#b8b8c0 0 3px,transparent 3px 5px);"></div>
<div class="abs" style="left:323px;top:473px;width:163px;height:1px;background:repeating-linear-gradient(90deg,#f8f8fa 0 3px,transparent 3px 5px);"></div>
<div class="abs" style="left:489px;top:472px;width:393px;height:1px;background:repeating-linear-gradient(90deg,#d8d8ee 0 3px,#ffffff 3px 5px);"></div>
<div class="abs" style="left:489px;top:473px;width:393px;height:1px;background:repeating-linear-gradient(90deg,#e4e4f4 0 3px,#ffffff 3px 5px);"></div>
<div class="t" style="right:1439.1px;top:452.75px;font-size:14px;text-align:right;font-weight:bold;letter-spacing:0.65px;">System Location</div>
<div class="t" style="left:501px;top:452.75px;font-size:14px;letter-spacing:0.6px;">default</div>
<div class="abs" style="left:323px;top:502px;width:163px;height:1px;background:repeating-linear-gradient(90deg,#b8b8c0 0 3px,transparent 3px 5px);"></div>
<div class="abs" style="left:323px;top:503px;width:163px;height:1px;background:repeating-linear-gradient(90deg,#f8f8fa 0 3px,transparent 3px 5px);"></div>
<div class="abs" style="left:489px;top:502px;width:393px;height:1px;background:repeating-linear-gradient(90deg,#d8d8ee 0 3px,#ffffff 3px 5px);"></div>
<div class="abs" style="left:489px;top:503px;width:393px;height:1px;background:repeating-linear-gradient(90deg,#e4e4f4 0 3px,#ffffff 3px 5px);"></div>
<div class="t" style="right:1439.1px;top:482.75px;font-size:14px;text-align:right;font-weight:bold;letter-spacing:0.65px;">System Contact</div>
<div class="t" style="left:501px;top:482.75px;font-size:14px;letter-spacing:0.6px;">default</div>
<div class="t" style="right:1439.1px;top:512.75px;font-size:14px;text-align:right;font-weight:bold;letter-spacing:0.65px;">Serial Number</div>
<div class="t" style="left:501px;top:512.75px;font-size:14px;letter-spacing:0.6px;">MS244910010</div>
<div class="abs" style="left:322px;top:383px;width:1px;height:150px;border-left:1px dashed #a0a0a0;box-sizing:border-box;"></div>
<div class="abs" style="left:486px;top:383px;width:1px;height:150px;border-left:1px dashed #a0a0a0;box-sizing:border-box;"></div>
<div class="abs" style="left:488px;top:383px;width:1px;height:150px;border-left:1px dashed #d8d8ee;box-sizing:border-box;"></div>
<div class="abs" style="left:881px;top:383px;width:1px;height:150px;border-left:1px dashed #d8d8ee;box-sizing:border-box;"></div>
<div class="abs" style="left:323px;top:384px;width:163px;height:1px;background:repeating-linear-gradient(90deg,#f8f8fa 0 3px,transparent 3px 5px);"></div>
<div class="abs" style="left:489px;top:384px;width:393px;height:1px;border-top:1px dashed #dcdcf0;box-sizing:border-box;"></div>
<div class="abs" style="left:322px;top:533px;width:165px;height:1px;border-top:1px dashed #a0a0a0;box-sizing:border-box;"></div>
<div class="abs" style="left:488px;top:533px;width:394px;height:1px;border-top:1px dashed #d8d8ee;box-sizing:border-box;"></div>
<div class="abs" style="left:322px;top:553px;width:165px;height:178px;background:#d6d6de;"></div>
<div class="abs" style="left:323px;top:581px;width:163px;height:1px;background:repeating-linear-gradient(90deg,#b8b8c0 0 3px,transparent 3px 5px);"></div>
<div class="abs" style="left:323px;top:582px;width:163px;height:1px;background:repeating-linear-gradient(90deg,#f8f8fa 0 3px,transparent 3px 5px);"></div>
<div class="abs" style="left:489px;top:581px;width:393px;height:1px;background:repeating-linear-gradient(90deg,#d8d8ee 0 3px,#ffffff 3px 5px);"></div>
<div class="abs" style="left:489px;top:582px;width:393px;height:1px;background:repeating-linear-gradient(90deg,#e4e4f4 0 3px,#ffffff 3px 5px);"></div>
<div class="t" style="right:1439.1px;top:560.95px;font-size:14px;text-align:right;font-weight:bold;letter-spacing:0.65px;">MAC Address</div>
<div class="t" style="left:501px;top:560.95px;font-size:14px;letter-spacing:0.6px;">78:D8:00:31:BD:AA</div>
<div class="abs" style="left:323px;top:611px;width:163px;height:1px;background:repeating-linear-gradient(90deg,#b8b8c0 0 3px,transparent 3px 5px);"></div>
<div class="abs" style="left:323px;top:612px;width:163px;height:1px;background:repeating-linear-gradient(90deg,#f8f8fa 0 3px,transparent 3px 5px);"></div>
<div class="abs" style="left:489px;top:611px;width:393px;height:1px;background:repeating-linear-gradient(90deg,#d8d8ee 0 3px,#ffffff 3px 5px);"></div>
<div class="abs" style="left:489px;top:612px;width:393px;height:1px;background:repeating-linear-gradient(90deg,#e4e4f4 0 3px,#ffffff 3px 5px);"></div>
<div class="t" style="right:1439.1px;top:590.95px;font-size:14px;text-align:right;font-weight:bold;letter-spacing:0.65px;">IPv4 Address</div>
<div class="t" style="left:501px;top:590.95px;font-size:14px;letter-spacing:0.6px;">192.168.1.168</div>
<div class="abs" style="left:323px;top:641px;width:163px;height:1px;background:repeating-linear-gradient(90deg,#b8b8c0 0 3px,transparent 3px 5px);"></div>
<div class="abs" style="left:323px;top:642px;width:163px;height:1px;background:repeating-linear-gradient(90deg,#f8f8fa 0 3px,transparent 3px 5px);"></div>
<div class="abs" style="left:489px;top:641px;width:393px;height:1px;background:repeating-linear-gradient(90deg,#d8d8ee 0 3px,#ffffff 3px 5px);"></div>
<div class="abs" style="left:489px;top:642px;width:393px;height:1px;background:repeating-linear-gradient(90deg,#e4e4f4 0 3px,#ffffff 3px 5px);"></div>
<div class="t" style="right:1439.1px;top:620.95px;font-size:14px;text-align:right;font-weight:bold;letter-spacing:0.65px;">IPv6 Address</div>
<div class="t" style="left:501px;top:620.95px;font-size:14px;letter-spacing:0.6px;">fe80::7ad8:ff:fe31:bdaa/64</div>
<div class="abs" style="left:323px;top:671px;width:163px;height:1px;background:repeating-linear-gradient(90deg,#b8b8c0 0 3px,transparent 3px 5px);"></div>
<div class="abs" style="left:323px;top:672px;width:163px;height:1px;background:repeating-linear-gradient(90deg,#f8f8fa 0 3px,transparent 3px 5px);"></div>
<div class="abs" style="left:489px;top:671px;width:393px;height:1px;background:repeating-linear-gradient(90deg,#d8d8ee 0 3px,#ffffff 3px 5px);"></div>
<div class="abs" style="left:489px;top:672px;width:393px;height:1px;background:repeating-linear-gradient(90deg,#e4e4f4 0 3px,#ffffff 3px 5px);"></div>
<div class="t" style="right:1439.1px;top:650.95px;font-size:14px;text-align:right;font-weight:bold;letter-spacing:0.65px;">System OID</div>
<div class="t" style="left:501px;top:650.95px;font-size:14px;letter-spacing:0.6px;">1.3.6.1.4.1.0.1.1</div>
<div class="abs" style="left:323px;top:701px;width:163px;height:1px;background:repeating-linear-gradient(90deg,#b8b8c0 0 3px,transparent 3px 5px);"></div>
<div class="abs" style="left:323px;top:702px;width:163px;height:1px;background:repeating-linear-gradient(90deg,#f8f8fa 0 3px,transparent 3px 5px);"></div>
<div class="abs" style="left:489px;top:701px;width:393px;height:1px;background:repeating-linear-gradient(90deg,#d8d8ee 0 3px,#ffffff 3px 5px);"></div>
<div class="abs" style="left:489px;top:702px;width:393px;height:1px;background:repeating-linear-gradient(90deg,#e4e4f4 0 3px,#ffffff 3px 5px);"></div>
<div class="t" style="right:1439.1px;top:680.95px;font-size:14px;text-align:right;font-weight:bold;letter-spacing:0.65px;">System Uptime</div>
<div class="t" style="left:501px;top:680.95px;font-size:14px;letter-spacing:0.6px;">0 day, 0 hr, 2 min and 58 sec</div>
<div class="t" style="right:1439.1px;top:710.95px;font-size:14px;text-align:right;font-weight:bold;letter-spacing:0.65px;">Current Time</div>
<div class="t" style="left:501px;top:710.95px;font-size:14px;letter-spacing:0.6px;">2024-01-01 08:02:01 UTC+8</div>
<div class="abs" style="left:322px;top:553px;width:1px;height:178px;border-left:1px dashed #a0a0a0;box-sizing:border-box;"></div>
<div class="abs" style="left:486px;top:553px;width:1px;height:178px;border-left:1px dashed #a0a0a0;box-sizing:border-box;"></div>
<div class="abs" style="left:488px;top:553px;width:1px;height:178px;border-left:1px dashed #d8d8ee;box-sizing:border-box;"></div>
<div class="abs" style="left:881px;top:553px;width:1px;height:178px;border-left:1px dashed #d8d8ee;box-sizing:border-box;"></div>
<div class="abs" style="left:322px;top:553px;width:165px;height:1px;border-top:1px dashed #a0a0a0;box-sizing:border-box;"></div>
<div class="abs" style="left:488px;top:553px;width:394px;height:1px;border-top:1px dashed #d8d8ee;box-sizing:border-box;"></div>
<div class="abs" style="left:322px;top:731px;width:165px;height:1px;border-top:1px dashed #a0a0a0;box-sizing:border-box;"></div>
<div class="abs" style="left:488px;top:731px;width:394px;height:1px;border-top:1px dashed #d8d8ee;box-sizing:border-box;"></div>
<div class="abs" style="left:322px;top:751px;width:165px;height:118px;background:#d6d6de;"></div>
<div class="abs" style="left:323px;top:779px;width:163px;height:1px;background:repeating-linear-gradient(90deg,#b8b8c0 0 3px,transparent 3px 5px);"></div>
<div class="abs" style="left:323px;top:780px;width:163px;height:1px;background:repeating-linear-gradient(90deg,#f8f8fa 0 3px,transparent 3px 5px);"></div>
<div class="abs" style="left:489px;top:779px;width:393px;height:1px;background:repeating-linear-gradient(90deg,#d8d8ee 0 3px,#ffffff 3px 5px);"></div>
<div class="abs" style="left:489px;top:780px;width:393px;height:1px;background:repeating-linear-gradient(90deg,#e4e4f4 0 3px,#ffffff 3px 5px);"></div>
<div class="t" style="right:1439.1px;top:758.95px;font-size:14px;text-align:right;font-weight:bold;letter-spacing:0.65px;">Loader Version</div>
<div class="t" style="left:501px;top:758.95px;font-size:14px;letter-spacing:0.6px;">3.6.7.55090</div>
<div class="abs" style="left:323px;top:809px;width:163px;height:1px;background:repeating-linear-gradient(90deg,#b8b8c0 0 3px,transparent 3px 5px);"></div>
<div class="abs" style="left:323px;top:810px;width:163px;height:1px;background:repeating-linear-gradient(90deg,#f8f8fa 0 3px,transparent 3px 5px);"></div>
<div class="abs" style="left:489px;top:809px;width:393px;height:1px;background:repeating-linear-gradient(90deg,#d8d8ee 0 3px,#ffffff 3px 5px);"></div>
<div class="abs" style="left:489px;top:810px;width:393px;height:1px;background:repeating-linear-gradient(90deg,#e4e4f4 0 3px,#ffffff 3px 5px);"></div>
<div class="t" style="right:1439.1px;top:788.95px;font-size:14px;text-align:right;font-weight:bold;letter-spacing:0.65px;">Loader Date</div>
<div class="t" style="left:501px;top:788.95px;font-size:14px;letter-spacing:0.6px;">Aug 22 2024 - 07:22:31</div>
<div class="abs" style="left:323px;top:839px;width:163px;height:1px;background:repeating-linear-gradient(90deg,#b8b8c0 0 3px,transparent 3px 5px);"></div>
<div class="abs" style="left:323px;top:840px;width:163px;height:1px;background:repeating-linear-gradient(90deg,#f8f8fa 0 3px,transparent 3px 5px);"></div>
<div class="abs" style="left:489px;top:839px;width:393px;height:1px;background:repeating-linear-gradient(90deg,#d8d8ee 0 3px,#ffffff 3px 5px);"></div>
<div class="abs" style="left:489px;top:840px;width:393px;height:1px;background:repeating-linear-gradient(90deg,#e4e4f4 0 3px,#ffffff 3px 5px);"></div>
<div class="t" style="right:1439.1px;top:818.95px;font-size:14px;text-align:right;font-weight:bold;letter-spacing:0.65px;">Firmware Version</div>
<div class="t" style="left:501px;top:818.95px;font-size:14px;letter-spacing:0.6px;">1.0.0.26</div>
<div class="t" style="right:1439.1px;top:848.95px;font-size:14px;text-align:right;font-weight:bold;letter-spacing:0.65px;">Firmware Date</div>
<div class="t" style="left:501px;top:848.95px;font-size:14px;letter-spacing:0.6px;">Aug 22 2024 - 07:22:43</div>
<div class="abs" style="left:322px;top:751px;width:1px;height:118px;border-left:1px dashed #a0a0a0;box-sizing:border-box;"></div>
<div class="abs" style="left:486px;top:751px;width:1px;height:118px;border-left:1px dashed #a0a0a0;box-sizing:border-box;"></div>
<div class="abs" style="left:488px;top:751px;width:1px;height:118px;border-left:1px dashed #d8d8ee;box-sizing:border-box;"></div>
<div class="abs" style="left:881px;top:751px;width:1px;height:118px;border-left:1px dashed #d8d8ee;box-sizing:border-box;"></div>
<div class="abs" style="left:322px;top:751px;width:165px;height:1px;border-top:1px dashed #a0a0a0;box-sizing:border-box;"></div>
<div class="abs" style="left:488px;top:751px;width:394px;height:1px;border-top:1px dashed #d8d8ee;box-sizing:border-box;"></div>
<div class="abs" style="left:322px;top:869px;width:165px;height:1px;border-top:1px dashed #a0a0a0;box-sizing:border-box;"></div>
<div class="abs" style="left:488px;top:869px;width:394px;height:1px;border-top:1px dashed #d8d8ee;box-sizing:border-box;"></div>
<div class="abs" style="left:322px;top:889px;width:165px;height:118px;background:#d6d6de;"></div>
<div class="abs" style="left:323px;top:917px;width:163px;height:1px;background:repeating-linear-gradient(90deg,#b8b8c0 0 3px,transparent 3px 5px);"></div>
<div class="abs" style="left:323px;top:918px;width:163px;height:1px;background:repeating-linear-gradient(90deg,#f8f8fa 0 3px,transparent 3px 5px);"></div>
<div class="abs" style="left:489px;top:917px;width:393px;height:1px;background:repeating-linear-gradient(90deg,#d8d8ee 0 3px,#ffffff 3px 5px);"></div>
<div class="abs" style="left:489px;top:918px;width:393px;height:1px;background:repeating-linear-gradient(90deg,#e4e4f4 0 3px,#ffffff 3px 5px);"></div>
<div class="t" style="right:1439.1px;top:896.95px;font-size:14px;text-align:right;font-weight:bold;letter-spacing:0.65px;">Telnet</div>
<div class="t" style="left:501px;top:896.95px;font-size:14px;letter-spacing:0.6px;">Enabled</div>
<div class="abs" style="left:323px;top:947px;width:163px;height:1px;background:repeating-linear-gradient(90deg,#b8b8c0 0 3px,transparent 3px 5px);"></div>
<div class="abs" style="left:323px;top:948px;width:163px;height:1px;background:repeating-linear-gradient(90deg,#f8f8fa 0 3px,transparent 3px 5px);"></div>
<div class="abs" style="left:489px;top:947px;width:393px;height:1px;background:repeating-linear-gradient(90deg,#d8d8ee 0 3px,#ffffff 3px 5px);"></div>
<div class="abs" style="left:489px;top:948px;width:393px;height:1px;background:repeating-linear-gradient(90deg,#e4e4f4 0 3px,#ffffff 3px 5px);"></div>
<div class="t" style="right:1439.1px;top:926.95px;font-size:14px;text-align:right;font-weight:bold;letter-spacing:0.65px;">SSH</div>
<div class="t" style="left:501px;top:926.95px;font-size:14px;letter-spacing:0.6px;">Disabled</div>
<div class="abs" style="left:323px;top:977px;width:163px;height:1px;background:repeating-linear-gradient(90deg,#b8b8c0 0 3px,transparent 3px 5px);"></div>
<div class="abs" style="left:323px;top:978px;width:163px;height:1px;background:repeating-linear-gradient(90deg,#f8f8fa 0 3px,transparent 3px 5px);"></div>
<div class="abs" style="left:489px;top:977px;width:393px;height:1px;background:repeating-linear-gradient(90deg,#d8d8ee 0 3px,#ffffff 3px 5px);"></div>
<div class="abs" style="left:489px;top:978px;width:393px;height:1px;background:repeating-linear-gradient(90deg,#e4e4f4 0 3px,#ffffff 3px 5px);"></div>
<div class="t" style="right:1439.1px;top:956.95px;font-size:14px;text-align:right;font-weight:bold;letter-spacing:0.65px;">HTTP</div>
<div class="t" style="left:501px;top:956.95px;font-size:14px;letter-spacing:0.6px;">Enabled</div>
<div class="t" style="right:1439.1px;top:986.95px;font-size:14px;text-align:right;font-weight:bold;letter-spacing:0.65px;">HTTPS</div>
<div class="t" style="left:501px;top:986.95px;font-size:14px;letter-spacing:0.6px;">Disabled</div>
<div class="abs" style="left:322px;top:889px;width:1px;height:118px;border-left:1px dashed #a0a0a0;box-sizing:border-box;"></div>
<div class="abs" style="left:486px;top:889px;width:1px;height:118px;border-left:1px dashed #a0a0a0;box-sizing:border-box;"></div>
<div class="abs" style="left:488px;top:889px;width:1px;height:118px;border-left:1px dashed #d8d8ee;box-sizing:border-box;"></div>
<div class="abs" style="left:881px;top:889px;width:1px;height:118px;border-left:1px dashed #d8d8ee;box-sizing:border-box;"></div>
<div class="abs" style="left:322px;top:889px;width:165px;height:1px;border-top:1px dashed #a0a0a0;box-sizing:border-box;"></div>
<div class="abs" style="left:488px;top:889px;width:394px;height:1px;border-top:1px dashed #d8d8ee;box-sizing:border-box;"></div>
<div class="abs" style="left:322px;top:1007px;width:165px;height:1px;border-top:1px dashed #a0a0a0;box-sizing:border-box;"></div>
<div class="abs" style="left:488px;top:1007px;width:394px;height:1px;border-top:1px dashed #d8d8ee;box-sizing:border-box;"></div>
<svg class="abs" style="left:890px;top:333px" width="450" height="320" viewBox="890 333 450 320"><rect x="949" y="353" width="372.5" height="267.70000000000005" fill="#d8dce0"/><line x1="949" x2="1321.5" y1="368.46" y2="368.46" stroke="#5e5e5e" stroke-width="1.3"/><line x1="949" x2="1321.5" y1="381.62" y2="381.62" stroke="#5e5e5e" stroke-width="1.3"/><line x1="949" x2="1321.5" y1="394.78" y2="394.78" stroke="#5e5e5e" stroke-width="1.3"/><line x1="949" x2="1321.5" y1="407.94" y2="407.94" stroke="#5e5e5e" stroke-width="1.3"/><line x1="949" x2="1321.5" y1="421.10" y2="421.10" stroke="#5e5e5e" stroke-width="1.3"/><line x1="949" x2="1321.5" y1="434.26" y2="434.26" stroke="#5e5e5e" stroke-width="1.3"/><line x1="949" x2="1321.5" y1="447.42" y2="447.42" stroke="#5e5e5e" stroke-width="1.3"/><line x1="949" x2="1321.5" y1="460.58" y2="460.58" stroke="#5e5e5e" stroke-width="1.3"/><line x1="949" x2="1321.5" y1="473.74" y2="473.74" stroke="#5e5e5e" stroke-width="1.3"/><line x1="949" x2="1321.5" y1="486.90" y2="486.90" stroke="#5e5e5e" stroke-width="1.3"/><line x1="949" x2="1321.5" y1="500.06" y2="500.06" stroke="#5e5e5e" stroke-width="1.3"/><line x1="949" x2="1321.5" y1="513.22" y2="513.22" stroke="#5e5e5e" stroke-width="1.3"/><line x1="949" x2="1321.5" y1="526.38" y2="526.38" stroke="#5e5e5e" stroke-width="1.3"/><line x1="949" x2="1321.5" y1="539.54" y2="539.54" stroke="#5e5e5e" stroke-width="1.3"/><line x1="949" x2="1321.5" y1="552.70" y2="552.70" stroke="#5e5e5e" stroke-width="1.3"/><line x1="949" x2="1321.5" y1="565.86" y2="565.86" stroke="#5e5e5e" stroke-width="1.3"/><line x1="949" x2="1321.5" y1="579.02" y2="579.02" stroke="#5e5e5e" stroke-width="1.3"/><line x1="949" x2="1321.5" y1="592.18" y2="592.18" stroke="#5e5e5e" stroke-width="1.3"/><line x1="949" x2="1321.5" y1="605.34" y2="605.34" stroke="#5e5e5e" stroke-width="1.3"/><line x1="960.70" x2="960.70" y1="353" y2="618.5" stroke="#5e5e5e" stroke-width="1.3"/><line x1="1005.77" x2="1005.77" y1="353" y2="618.5" stroke="#5e5e5e" stroke-width="1.3"/><line x1="1050.84" x2="1050.84" y1="353" y2="618.5" stroke="#5e5e5e" stroke-width="1.3"/><line x1="1095.91" x2="1095.91" y1="353" y2="618.5" stroke="#5e5e5e" stroke-width="1.3"/><line x1="1140.98" x2="1140.98" y1="353" y2="618.5" stroke="#5e5e5e" stroke-width="1.3"/><line x1="1186.05" x2="1186.05" y1="353" y2="618.5" stroke="#5e5e5e" stroke-width="1.3"/><line x1="1231.12" x2="1231.12" y1="353" y2="618.5" stroke="#5e5e5e" stroke-width="1.3"/><line x1="1276.19" x2="1276.19" y1="353" y2="618.5" stroke="#5e5e5e" stroke-width="1.3"/><polygon points="951,618.5 1281.4,618.5 1288.0,602.7 1296.9,565.3 1304.3,570.9 1311.6,568.2 1320.0,573.8 1320,618.5" fill="#6bb8c1" fill-opacity="0.56"/><polyline points="951,618.0 1281.4,618.5 1288.0,602.7 1296.9,565.3 1304.3,570.9 1311.6,568.2 1320.0,573.8" fill="none" stroke="#3c9fb6" stroke-width="1.6"/><line x1="951" x2="1282" y1="616.7" y2="616.7" stroke="#b8e4ec" stroke-width="1"/><rect x="950.2" y="354.2" width="370.1" height="265.30000000000007" fill="none" stroke="#4e4e4e" stroke-width="2.4"/><rect x="1258.3" y="363" width="54.2" height="16.6" fill="#fff" fill-opacity="0.85"/><rect x="1260.3" y="365" width="17" height="11.8" fill="#3d9fb8"/><text x="1280.3" y="376.6" font-family="Liberation Sans" font-size="15" fill="#505050">CPU</text><text x="943.5" y="624.3" text-anchor="end" font-family="Liberation Sans" font-size="14" fill="#5a5a5a" letter-spacing="0.4">0%</text><text x="943.5" y="598.0" text-anchor="end" font-family="Liberation Sans" font-size="14" fill="#5a5a5a" letter-spacing="0.4">10%</text><text x="943.5" y="571.7" text-anchor="end" font-family="Liberation Sans" font-size="14" fill="#5a5a5a" letter-spacing="0.4">20%</text><text x="943.5" y="545.3" text-anchor="end" font-family="Liberation Sans" font-size="14" fill="#5a5a5a" letter-spacing="0.4">30%</text><text x="943.5" y="519.0" text-anchor="end" font-family="Liberation Sans" font-size="14" fill="#5a5a5a" letter-spacing="0.4">40%</text><text x="943.5" y="492.7" text-anchor="end" font-family="Liberation Sans" font-size="14" fill="#5a5a5a" letter-spacing="0.4">50%</text><text x="943.5" y="466.4" text-anchor="end" font-family="Liberation Sans" font-size="14" fill="#5a5a5a" letter-spacing="0.4">60%</text><text x="943.5" y="440.1" text-anchor="end" font-family="Liberation Sans" font-size="14" fill="#5a5a5a" letter-spacing="0.4">70%</text><text x="943.5" y="413.7" text-anchor="end" font-family="Liberation Sans" font-size="14" fill="#5a5a5a" letter-spacing="0.4">80%</text><text x="943.5" y="387.4" text-anchor="end" font-family="Liberation Sans" font-size="14" fill="#5a5a5a" letter-spacing="0.4">90%</text><text x="943.5" y="361.1" text-anchor="end" font-family="Liberation Sans" font-size="14" fill="#5a5a5a" letter-spacing="0.4">100%</text><text x="967.5" y="637.7" text-anchor="middle" font-family="Liberation Sans" font-size="14" fill="#5a5a5a" letter-spacing="0.35">07:58:00</text><text x="1057.5" y="637.7" text-anchor="middle" font-family="Liberation Sans" font-size="14" fill="#5a5a5a" letter-spacing="0.35">07:59:00</text><text x="1147.5" y="637.7" text-anchor="middle" font-family="Liberation Sans" font-size="14" fill="#5a5a5a" letter-spacing="0.35">08:00:00</text><text x="1237.5" y="637.7" text-anchor="middle" font-family="Liberation Sans" font-size="14" fill="#5a5a5a" letter-spacing="0.35">08:01:00</text></svg>
<svg class="abs" style="left:890px;top:696.6px" width="450" height="320" viewBox="890 696.6 450 320"><rect x="949" y="716.6" width="372.5" height="266.4" fill="#d8dce0"/><line x1="949" x2="1321.5" y1="732.00" y2="732.00" stroke="#5e5e5e" stroke-width="1.3"/><line x1="949" x2="1321.5" y1="745.09" y2="745.09" stroke="#5e5e5e" stroke-width="1.3"/><line x1="949" x2="1321.5" y1="758.18" y2="758.18" stroke="#5e5e5e" stroke-width="1.3"/><line x1="949" x2="1321.5" y1="771.28" y2="771.28" stroke="#5e5e5e" stroke-width="1.3"/><line x1="949" x2="1321.5" y1="784.38" y2="784.38" stroke="#5e5e5e" stroke-width="1.3"/><line x1="949" x2="1321.5" y1="797.47" y2="797.47" stroke="#5e5e5e" stroke-width="1.3"/><line x1="949" x2="1321.5" y1="810.56" y2="810.56" stroke="#5e5e5e" stroke-width="1.3"/><line x1="949" x2="1321.5" y1="823.66" y2="823.66" stroke="#5e5e5e" stroke-width="1.3"/><line x1="949" x2="1321.5" y1="836.75" y2="836.75" stroke="#5e5e5e" stroke-width="1.3"/><line x1="949" x2="1321.5" y1="849.85" y2="849.85" stroke="#5e5e5e" stroke-width="1.3"/><line x1="949" x2="1321.5" y1="862.94" y2="862.94" stroke="#5e5e5e" stroke-width="1.3"/><line x1="949" x2="1321.5" y1="876.04" y2="876.04" stroke="#5e5e5e" stroke-width="1.3"/><line x1="949" x2="1321.5" y1="889.13" y2="889.13" stroke="#5e5e5e" stroke-width="1.3"/><line x1="949" x2="1321.5" y1="902.23" y2="902.23" stroke="#5e5e5e" stroke-width="1.3"/><line x1="949" x2="1321.5" y1="915.32" y2="915.32" stroke="#5e5e5e" stroke-width="1.3"/><line x1="949" x2="1321.5" y1="928.42" y2="928.42" stroke="#5e5e5e" stroke-width="1.3"/><line x1="949" x2="1321.5" y1="941.51" y2="941.51" stroke="#5e5e5e" stroke-width="1.3"/><line x1="949" x2="1321.5" y1="954.61" y2="954.61" stroke="#5e5e5e" stroke-width="1.3"/><line x1="949" x2="1321.5" y1="967.70" y2="967.70" stroke="#5e5e5e" stroke-width="1.3"/><line x1="960.70" x2="960.70" y1="716.6" y2="980.8" stroke="#5e5e5e" stroke-width="1.3"/><line x1="1005.77" x2="1005.77" y1="716.6" y2="980.8" stroke="#5e5e5e" stroke-width="1.3"/><line x1="1050.84" x2="1050.84" y1="716.6" y2="980.8" stroke="#5e5e5e" stroke-width="1.3"/><line x1="1095.91" x2="1095.91" y1="716.6" y2="980.8" stroke="#5e5e5e" stroke-width="1.3"/><line x1="1140.98" x2="1140.98" y1="716.6" y2="980.8" stroke="#5e5e5e" stroke-width="1.3"/><line x1="1186.05" x2="1186.05" y1="716.6" y2="980.8" stroke="#5e5e5e" stroke-width="1.3"/><line x1="1231.12" x2="1231.12" y1="716.6" y2="980.8" stroke="#5e5e5e" stroke-width="1.3"/><line x1="1276.19" x2="1276.19" y1="716.6" y2="980.8" stroke="#5e5e5e" stroke-width="1.3"/><polygon points="951,980.8 1281.4,980.8 1289.5,818.4 1320.0,818.4 1320,980.8" fill="#6bb8c1" fill-opacity="0.56"/><polyline points="951,980.3 1281.4,980.8 1289.5,818.4 1320.0,818.4" fill="none" stroke="#3c9fb6" stroke-width="1.6"/><line x1="951" x2="1282" y1="979.0" y2="979.0" stroke="#b8e4ec" stroke-width="1"/><rect x="950.2" y="717.8000000000001" width="370.1" height="264.0" fill="none" stroke="#4e4e4e" stroke-width="2.4"/><rect x="1255.0" y="726.6" width="57.5" height="16.6" fill="#fff" fill-opacity="0.85"/><rect x="1257.0" y="728.6" width="17" height="11.8" fill="#3d9fb8"/><text x="1277.0" y="740.2" font-family="Liberation Sans" font-size="15" fill="#505050">MEM</text><text x="943.5" y="985.1" text-anchor="end" font-family="Liberation Sans" font-size="14" fill="#5a5a5a" letter-spacing="0.4">0%</text><text x="943.5" y="958.9" text-anchor="end" font-family="Liberation Sans" font-size="14" fill="#5a5a5a" letter-spacing="0.4">10%</text><text x="943.5" y="932.7" text-anchor="end" font-family="Liberation Sans" font-size="14" fill="#5a5a5a" letter-spacing="0.4">20%</text><text x="943.5" y="906.5" text-anchor="end" font-family="Liberation Sans" font-size="14" fill="#5a5a5a" letter-spacing="0.4">30%</text><text x="943.5" y="880.3" text-anchor="end" font-family="Liberation Sans" font-size="14" fill="#5a5a5a" letter-spacing="0.4">40%</text><text x="943.5" y="854.1" text-anchor="end" font-family="Liberation Sans" font-size="14" fill="#5a5a5a" letter-spacing="0.4">50%</text><text x="943.5" y="828.0" text-anchor="end" font-family="Liberation Sans" font-size="14" fill="#5a5a5a" letter-spacing="0.4">60%</text><text x="943.5" y="801.8" text-anchor="end" font-family="Liberation Sans" font-size="14" fill="#5a5a5a" letter-spacing="0.4">70%</text><text x="943.5" y="775.6" text-anchor="end" font-family="Liberation Sans" font-size="14" fill="#5a5a5a" letter-spacing="0.4">80%</text><text x="943.5" y="749.4" text-anchor="end" font-family="Liberation Sans" font-size="14" fill="#5a5a5a" letter-spacing="0.4">90%</text><text x="943.5" y="723.2" text-anchor="end" font-family="Liberation Sans" font-size="14" fill="#5a5a5a" letter-spacing="0.4">100%</text><text x="967.5" y="1000.0" text-anchor="middle" font-family="Liberation Sans" font-size="14" fill="#5a5a5a" letter-spacing="0.35">07:58:00</text><text x="1057.5" y="1000.0" text-anchor="middle" font-family="Liberation Sans" font-size="14" fill="#5a5a5a" letter-spacing="0.35">07:59:00</text><text x="1147.5" y="1000.0" text-anchor="middle" font-family="Liberation Sans" font-size="14" fill="#5a5a5a" letter-spacing="0.35">08:00:00</text><text x="1237.5" y="1000.0" text-anchor="middle" font-family="Liberation Sans" font-size="14" fill="#5a5a5a" letter-spacing="0.35">08:01:00</text></svg>
</div>
</body></html>
